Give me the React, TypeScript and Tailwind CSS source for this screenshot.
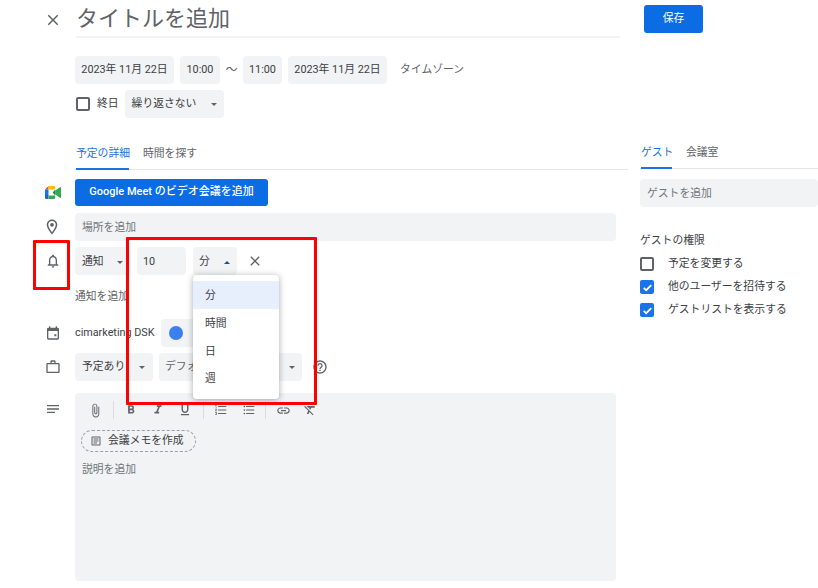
type IconProps = { d: string; className?: string };

function Icon({ d, className }: IconProps) {
  return (
    <svg viewBox="0 0 24 24" className={className} fill="currentColor">
      <path d={d} />
    </svg>
  );
}

const paths = {
  close: 'M19 6.41L17.59 5 12 10.59 6.41 5 5 6.41 10.59 12 5 17.59 6.41 19 12 13.41 17.59 19 19 17.59 13.41 12z',
  place: 'M12 2C8.13 2 5 5.13 5 9c0 5.25 7 13 7 13s7-7.75 7-13c0-3.87-3.13-7-7-7zM7 9c0-2.76 2.24-5 5-5s5 2.24 5 5c0 2.88-2.88 7.19-5 9.88C9.92 16.21 7 11.85 7 9zm5-2.5a2.5 2.5 0 100 5 2.5 2.5 0 000-5z',
  bell: 'M12 22c1.1 0 2-.9 2-2h-4c0 1.1.9 2 2 2zm6-6v-5c0-3.07-1.63-5.64-4.5-6.32V4c0-.83-.67-1.5-1.5-1.5s-1.5.67-1.5 1.5v.68C7.64 5.36 6 7.92 6 11v5l-2 2v1h16v-1l-2-2zm-2 1H8v-6c0-2.48 1.51-4.5 4-4.5s4 2.02 4 4.5v6z',
  event: 'M19 4h-1V2h-2v2H8V2H6v2H5c-1.1 0-2 .9-2 2v14c0 1.1.9 2 2 2h14c1.1 0 2-.9 2-2V6c0-1.1-.9-2-2-2zm0 16H5V9h14v11zm-5-6h3v3h-3z',
  work: 'M20 6h-4V4c0-1.1-.9-2-2-2h-4c-1.1 0-2 .9-2 2v2H4c-1.1 0-2 .9-2 2v11c0 1.1.9 2 2 2h16c1.1 0 2-.9 2-2V8c0-1.1-.9-2-2-2zM10 4h4v2h-4V4zm10 15H4V8h16v11z',
  notes: 'M3 18h12v-2H3v2zM3 6v2h18V6H3zm0 7h18v-2H3v2z',
  attach: 'M16.5 6v11.5c0 2.21-1.79 4-4 4s-4-1.79-4-4V5c0-1.38 1.12-2.5 2.5-2.5s2.5 1.12 2.5 2.5v10.5c0 .55-.45 1-1 1s-1-.45-1-1V6H10v9.5c0 1.38 1.12 2.5 2.5 2.5s2.5-1.12 2.5-2.5V5c0-2.21-1.79-4-4-4S7 2.79 7 5v12.5c0 3.04 2.46 5.5 5.5 5.5s5.5-2.46 5.5-5.5V6h-1.5z',
  bold: 'M15.6 10.79c.97-.67 1.65-1.77 1.65-2.79 0-2.26-1.75-4-4-4H7v14h7.04c2.09 0 3.71-1.7 3.71-3.79 0-1.52-.86-2.82-2.15-3.42zM10 6.5h3c.83 0 1.5.67 1.5 1.5s-.67 1.5-1.5 1.5h-3v-3zm3.5 9H10v-3h3.5c.83 0 1.5.67 1.5 1.5s-.67 1.5-1.5 1.5z',
  italic: 'M10 4v3h2.21l-3.42 8H6v3h8v-3h-2.21l3.42-8H18V4z',
  underline: 'M12 17c3.31 0 6-2.69 6-6V3h-2.5v8c0 1.93-1.57 3.5-3.5 3.5S8.5 12.93 8.5 11V3H6v8c0 3.31 2.69 6 6 6zm-7 2v2h14v-2H5z',
  ol: 'M2 17h2v.5H3v1h1v.5H2v1h3v-4H2v1zm1-9h1V4H2v1h1v3zm-1 3h1.8L2 13.1v.9h3v-1H3.2L5 10.9V10H2v1zm5-6v2h14V5H7zm0 14h14v-2H7v2zm0-6h14v-2H7v2z',
  ul: 'M4 10.5c-.83 0-1.5.67-1.5 1.5s.67 1.5 1.5 1.5 1.5-.67 1.5-1.5-.67-1.5-1.5-1.5zm0-6c-.83 0-1.5.67-1.5 1.5S3.17 7.5 4 7.5 5.5 6.83 5.5 6 4.83 4.5 4 4.5zm0 12c-.83 0-1.5.68-1.5 1.5s.68 1.5 1.5 1.5 1.5-.68 1.5-1.5-.67-1.5-1.5-1.5zM7 19h14v-2H7v2zm0-6h14v-2H7v2zm0-8v2h14V5H7z',
  link: 'M3.9 12c0-1.71 1.39-3.1 3.1-3.1h4V7H7c-2.76 0-5 2.24-5 5s2.24 5 5 5h4v-1.9H7c-1.71 0-3.1-1.39-3.1-3.1zM8 13h8v-2H8v2zm9-6h-4v1.9h4c1.71 0 3.1 1.39 3.1 3.1s-1.39 3.1-3.1 3.1h-4V17h4c2.76 0 5-2.24 5-5s-2.24-5-5-5z',
  clear: 'M3.27 5L2 6.27l6.97 6.97L6.5 19h3l1.57-3.66L16.73 21 18 19.73 3.55 5.27 3.27 5zM6 5v.18L8.82 8h2.4l-.72 1.68 2.1 2.1L14.21 8H20V5H6z',
  help: 'M11 18h2v-2h-2v2zm1-16C6.48 2 2 6.48 2 12s4.48 10 10 10 10-4.48 10-10S17.52 2 12 2zm0 18c-4.41 0-8-3.59-8-8s3.59-8 8-8 8 3.59 8 8-3.59 8-8 8zm0-14c-2.21 0-4 1.79-4 4h2c0-1.1.9-2 2-2s2 .9 2 2c0 2-3 1.75-3 5h2c0-2.25 3-2.5 3-5 0-2.21-1.79-4-4-4z',
  doc: 'M19 5v14H5V5h14m0-2H5c-1.1 0-2 .9-2 2v14c0 1.1.9 2 2 2h14c1.1 0 2-.9 2-2V5c0-1.1-.9-2-2-2zM7 7h10v2H7zm0 4h10v2H7zm0 4h7v2H7z',
};

function Caret({ up, className }: { up?: boolean; className?: string }) {
  return (
    <span
      className={`block h-0 w-0 border-x-[3.5px] border-x-transparent ${up ? 'border-b-[3.5px] border-b-[#174ea6]' : 'border-t-[3.5px] border-t-[#5f6368]'} ${className ?? ''}`}
    />
  );
}

function Chip({ children, className }: { children: React.ReactNode; className?: string }) {
  return (
    <div className={`flex h-[28px] items-center rounded-[4px] bg-[#f1f3f4] text-[10.8px] text-[#3c4043] ${className ?? ''}`}>
      {children}
    </div>
  );
}

function Row({ icon, children, className }: { icon?: React.ReactNode; children: React.ReactNode; className?: string }) {
  return (
    <div className={`flex items-center ${className ?? ''}`}>
      <div className="flex w-[75px] shrink-0 justify-end pr-[14px]">{icon}</div>
      {children}
    </div>
  );
}

function MeetLogo() {
  return (
    <svg viewBox="0 0 16 13" className="h-[13px] w-[16px]">
      <path d="M0 3.5 3.5 0v3.5z" fill="#ea4335" />
      <path d="M3.5 0H9a1.2 1.2 0 0 1 1.2 1.2v2.3H3.5z" fill="#fbbc04" />
      <path d="M0 3.5h3.5v5.5H0z" fill="#1a73e8" />
      <path d="M0 9h3.5v4H1.2A1.2 1.2 0 0 1 0 11.8z" fill="#1967d2" />
      <path d="M3.5 9.4h6.7v2.4A1.2 1.2 0 0 1 9 13H3.5z" fill="#34a853" />
      <path d="M10.2 3.5v6l-2.4-3z" fill="#188038" />
      <path d="M10.2 4.6 15 1.2c.4-.3 1 0 1 .5v9.6c0 .5-.6.8-1 .5l-4.8-3.4z" fill="#34a853" />
    </svg>
  );
}

function Check({ checked }: { checked?: boolean }) {
  if (checked) {
    return (
      <div className="flex h-[14px] w-[14px] items-center justify-center rounded-[2px] bg-[#1a73e8]">
        <svg viewBox="0 0 24 24" className="h-[13px] w-[13px]" fill="none" stroke="#fff" strokeWidth="3.2">
          <path d="M5 12.5l4.5 4.5L19 7.5" />
        </svg>
      </div>
    );
  }
  return <div className="h-[14px] w-[14px] rounded-[2px] border-2 border-[#5f6368]" />;
}

const toolbar = [
  { d: paths.bold, w: 'w-[27px]' },
  { d: paths.italic, w: 'w-[27px]' },
  { d: paths.underline, w: 'w-[28px]' },
];

export default function App() {
  return (
    <div
      className="relative h-[588px] w-[818px] overflow-hidden bg-white text-[#3c4043]"
      style={{ fontFamily: 'Roboto, "Noto Sans CJK JP", sans-serif' }}
    >
      <div className="flex">
        {/* left column */}
        <div className="w-[628px] shrink-0">
          <div className="flex h-[38px] items-start pt-[2px]">
            <div className="flex w-[76px] shrink-0 justify-end pr-[14px] pt-[9px]">
              <Icon d={paths.close} className="h-[18px] w-[18px] text-[#5f6368]" />
            </div>
            <div className="h-[36px] w-[544px] border-b-2 border-[#f1f3f4] text-[22px] leading-[34px] text-[#5f6368]">
              タイトルを追加
            </div>
          </div>

          <Row className="mt-[18px]">
            <div className="flex items-center">
              <Chip className="w-[99px] justify-center">2023年 11月 22日</Chip>
              <Chip className="ml-[6px] w-[40px] justify-center">10:00</Chip>
              <span className="flex w-[23px] justify-center text-[12px] text-[#5f6368]">〜</span>
              <Chip className="w-[39px] justify-center">11:00</Chip>
              <Chip className="ml-[6px] w-[99px] justify-center">2023年 11月 22日</Chip>
              <span className="ml-[13px] text-[10.8px] text-[#5f6368]">タイムゾーン</span>
            </div>
          </Row>

          <Row className="mt-[6px]">
            <div className="flex items-center">
              <div className="ml-[1px]">
                <Check />
              </div>
              <span className="ml-[7px] text-[10.8px]">終日</span>
              <Chip className="ml-[6px] w-[99px] justify-between pb-px pl-[7px] pr-[7px] pt-[2px]">
                繰り返さない
                <Caret />
              </Chip>
            </div>
          </Row>

          <div className="ml-[75px] mt-[27px] h-[25px] border-b border-[#e4e6e8] pl-[1px]">
            <div className="flex whitespace-nowrap text-[10.8px] leading-[16px]">
              <div className="h-[25px] w-[53px] border-b-[2px] border-[#1a73e8] pt-[1px] text-[#1a73e8]">予定の詳細</div>
              <div className="ml-[14px] pt-[1px] text-[#5f6368]">時間を探す</div>
            </div>
          </div>

          <Row className="mt-[9px]" icon={<MeetLogo />}>
            <button className="h-[27px] w-[193px] rounded-[3px] bg-[#0b6ce4] text-[11px] font-medium text-white">
              Google Meet のビデオ会議を追加
            </button>
          </Row>

          <Row className="mt-[7px]" icon={<Icon d={paths.place} className="h-[18px] w-[18px] text-[#5f6368]" />}>
            <Chip className="h-[27px] w-[541px] pl-[7px] pt-[2px] text-[#70757a]">場所を追加</Chip>
          </Row>

          <Row className="mt-[6px]" icon={<Icon d={paths.bell} className="h-[16px] w-[16px] text-[#5f6368]" />}>
            <div className="flex items-center">
              <Chip className="w-[55px] justify-between pl-[7px] pr-[7px] pt-[2px]">
                通知
                <Caret />
              </Chip>
              <Chip className="ml-[7px] w-[49px] pl-[6px] pt-[2px]">10</Chip>
              <Chip className="ml-[7px] w-[44px] justify-between bg-[#dfe1e3] pl-[6px] pr-[7px] pt-[2px]">
                分
                <Caret up />
              </Chip>
              <Icon d={paths.close} className="ml-[10px] h-[16px] w-[16px] text-[#5f6368]" />
            </div>
          </Row>

          <Row className="mt-[14px] h-[16px]">
            <span className="text-[10.8px] text-[#5f6368]">通知を追加</span>
          </Row>

          <Row className="mt-[14px]" icon={<Icon d={paths.event} className="h-[16px] w-[16px] text-[#5f6368]" />}>
            <span className="w-[86px] whitespace-nowrap text-[10.8px]">cimarketing DSK</span>
            <Chip className="w-[56px] pl-[8px]">
              <span className="h-[14px] w-[14px] rounded-full bg-[#3b7ff1]" />
            </Chip>
          </Row>

          <Row className="mt-[6px]" icon={<Icon d={paths.work} className="h-[16px] w-[16px] text-[#5f6368]" />}>
            <div className="flex items-center">
              <Chip className="w-[78px] justify-between pl-[7px] pr-[8px]">
                予定あり
                <Caret />
              </Chip>
              <Chip className="ml-[6px] w-[143px] justify-between pl-[6px] pr-[7px]">
                <span className="text-[#5f6368]">デフォ</span>
                <Caret />
              </Chip>
              <Icon d={paths.help} className="ml-[10px] h-[16px] w-[16px] text-[#5f6368]" />
            </div>
          </Row>

          <div className="mt-[12px] flex items-start">
            <div className="flex w-[75px] shrink-0 justify-end pr-[14px] pt-[8px]">
              <Icon d={paths.notes} className="h-[16px] w-[16px] text-[#5f6368]" />
            </div>
            <div className="h-[188px] w-[541px] rounded-[4px] bg-[#f1f3f4] pl-[6px] pt-[8px]">
              <div className="flex h-[18px] items-center text-[#5f6368]">
                <div className="flex w-[28px] justify-center">
                  <Icon d={paths.attach} className="h-[15px] w-[15px]" />
                </div>
                <div className="ml-[4px] mr-[3px] h-[18px] w-px bg-[#dadce0]" />
                {toolbar.map(t => (
                  <div key={t.d} className={`flex justify-center ${t.w}`}>
                    <Icon d={t.d} className="h-[14px] w-[14px]" />
                  </div>
                ))}
                <div className="ml-[4px] mr-[3px] h-[18px] w-px bg-[#dadce0]" />
                <div className="flex w-[28px] justify-center">
                  <Icon d={paths.ol} className="h-[14px] w-[14px]" />
                </div>
                <div className="flex w-[28px] justify-center">
                  <Icon d={paths.ul} className="h-[14px] w-[14px]" />
                </div>
                <div className="ml-[2px] mr-[3px] h-[18px] w-px bg-[#dadce0]" />
                <div className="flex w-[28px] justify-center">
                  <Icon d={paths.link} className="h-[15px] w-[15px]" />
                </div>
                <div className="flex w-[26px] justify-center">
                  <Icon d={paths.clear} className="h-[14px] w-[14px]" />
                </div>
              </div>
              <div className="mt-[11px] flex h-[22px] w-[115px] items-center rounded-full border border-dashed border-[#9aa0a6] pl-[8px] text-[10.8px]">
                <Icon d={paths.doc} className="h-[12px] w-[12px] text-[#5f6368]" />
                <span className="ml-[6px]">会議メモを作成</span>
              </div>
              <div className="ml-[1px] mt-[10px] text-[10.8px] leading-[16px] text-[#70757a]">説明を追加</div>
            </div>
          </div>
        </div>

        {/* right column */}
        <div className="ml-[12px] flex-1">
          <button className="ml-[4px] mt-[5px] block h-[28px] w-[59px] rounded-[3px] bg-[#0b6ce4] text-[10.8px] text-white">
            保存
          </button>
          <div className="mt-[111px] h-[25px] border-b border-[#e4e6e8] pl-[1px]">
            <div className="flex whitespace-nowrap text-[10.8px] leading-[16px]">
              <div className="h-[25px] w-[31px] border-b-[2px] border-[#1a73e8] pt-[1px] text-[#1a73e8]">ゲスト</div>
              <div className="ml-[14px] pt-[1px] text-[#5f6368]">会議室</div>
            </div>
          </div>
          <Chip className="mt-[10px] h-[27px] pl-[7px] pt-[2px] text-[#70757a]">ゲストを追加</Chip>
          <div className="mt-[26px] text-[10.8px] leading-[16px]">ゲストの権限</div>
          <div className="mt-[8px] flex flex-col gap-[9px] text-[10.8px] leading-[14px]">
            <div className="flex items-center gap-[14px]">
              <Check />
              予定を変更する
            </div>
            <div className="flex items-center gap-[14px]">
              <Check checked />
              他のユーザーを招待する
            </div>
            <div className="flex items-center gap-[14px]">
              <Check checked />
              ゲストリストを表示する
            </div>
          </div>
        </div>
      </div>

      {/* dropdown menu over the form */}
      <div className="absolute left-[193px] top-[275px] h-[124px] w-[86px] rounded-[4px] bg-white pt-[6px] text-[10.8px] shadow-[0_1px_6px_rgba(60,64,67,0.45)]">
        <div className="flex h-[28px] items-center bg-[#e8effc] pl-[12px] pt-[2px]">分</div>
        <div className="flex h-[28px] items-center pl-[12px] pt-[2px]">時間</div>
        <div className="flex h-[28px] items-center pl-[12px] pt-[2px]">日</div>
        <div className="flex h-[28px] items-center pl-[12px]">週</div>
      </div>

      {/* red annotation boxes */}
      <div className="absolute left-[33px] top-[240px] h-[50px] w-[37px] rounded-[1px] border-[3px] border-[#ff0000]" />
      <div className="absolute left-[126px] top-[237px] h-[168px] w-[191px] rounded-[1px] border-[3px] border-[#ff0000]" />
    </div>
  );
}
